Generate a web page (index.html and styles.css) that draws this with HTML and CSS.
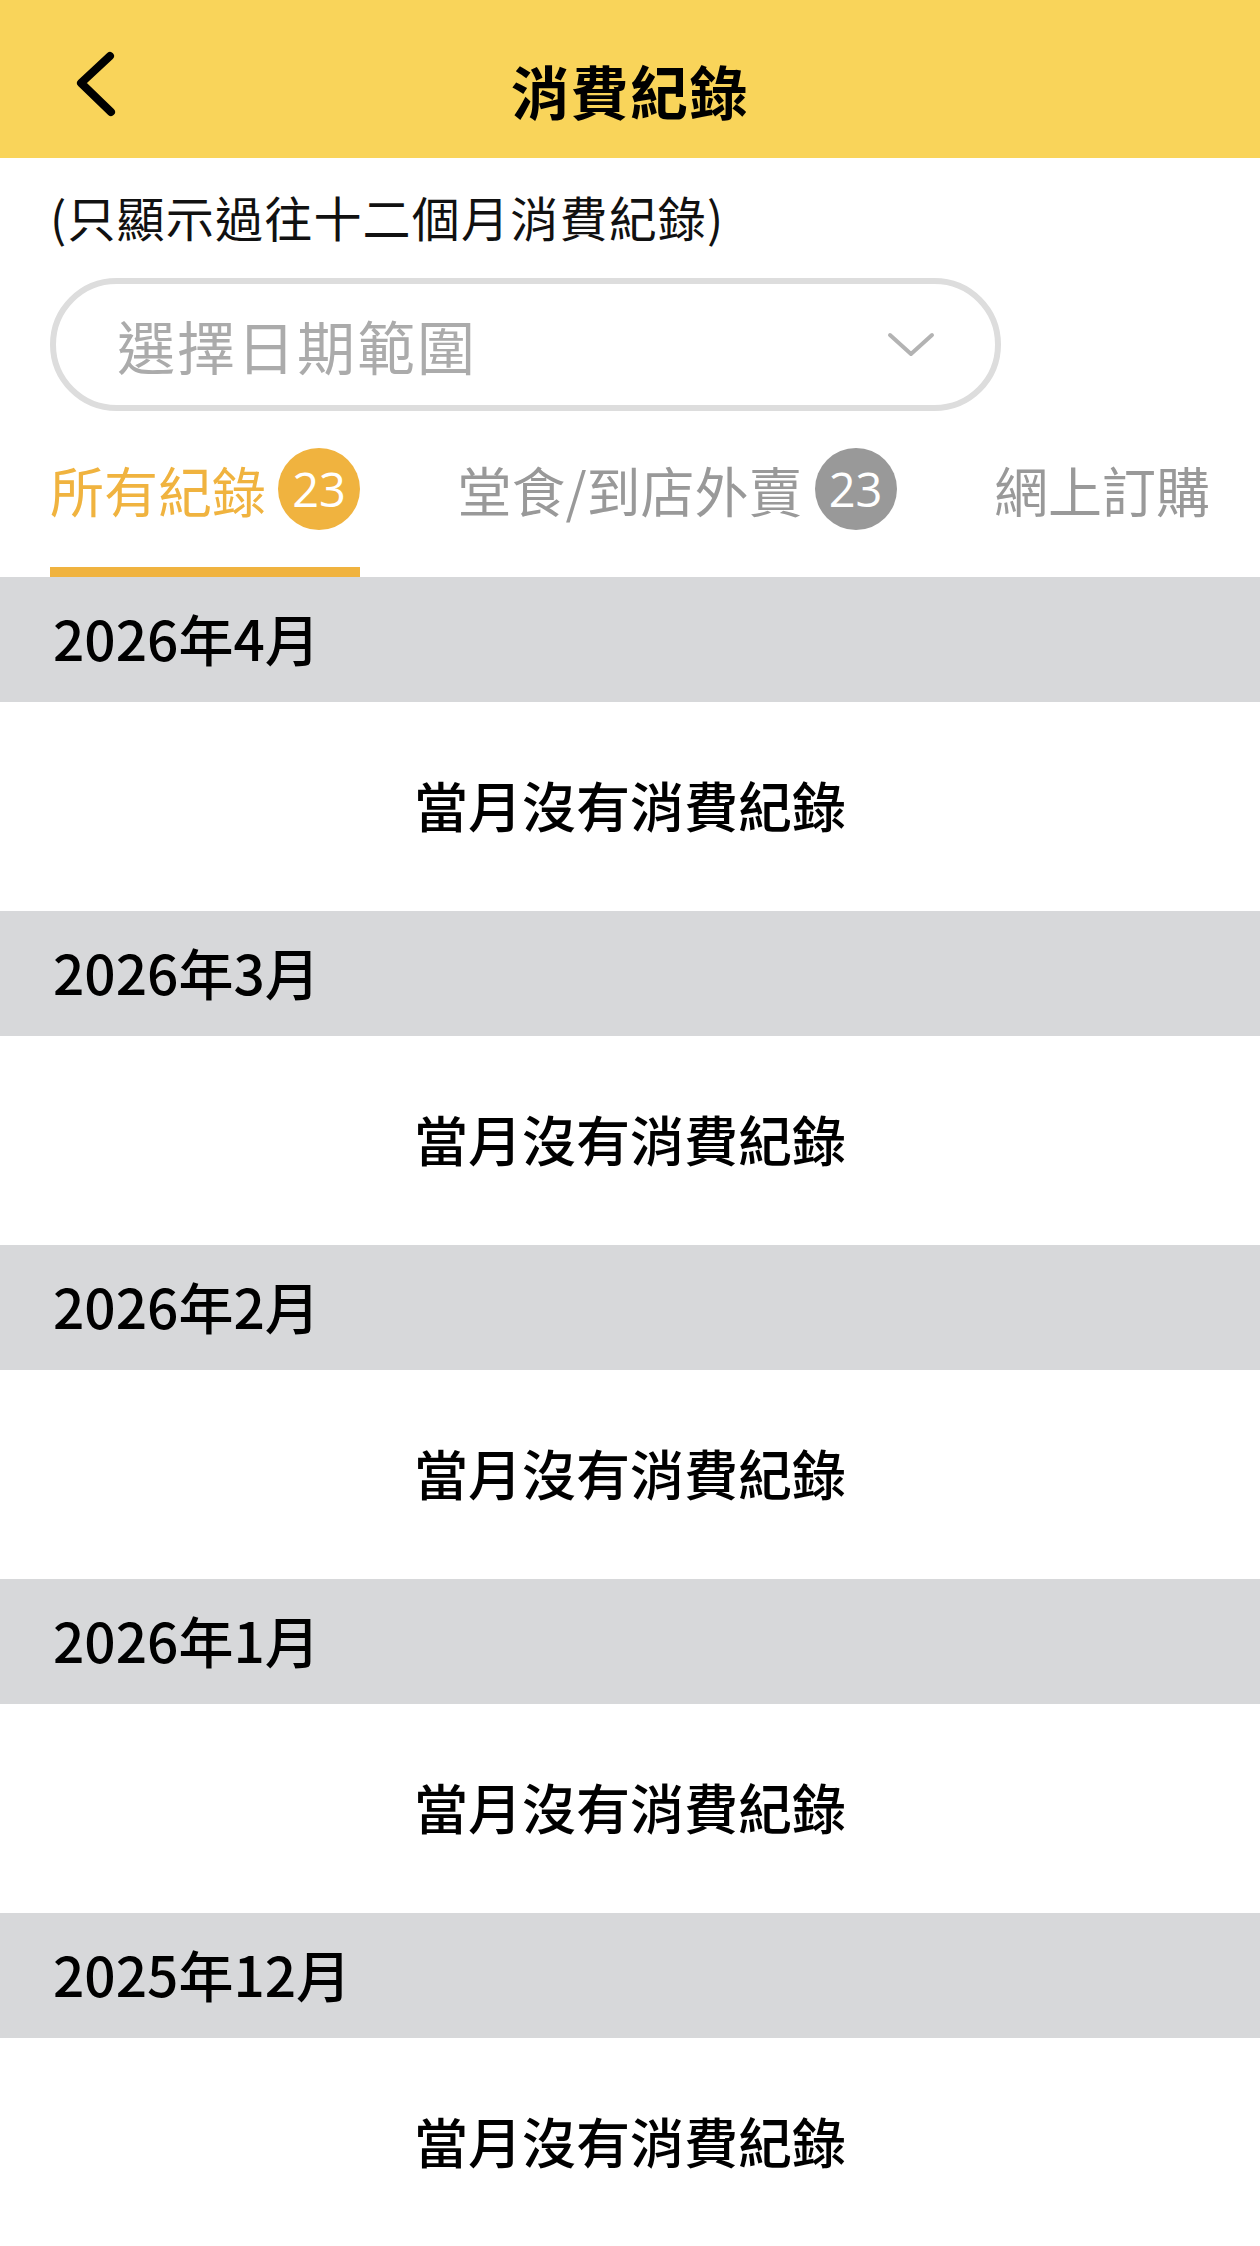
FILE: index.html
```html
<!DOCTYPE html>
<html lang="zh-Hant">
<head>
    <meta charset="UTF-8">
    <meta name="viewport" content="width=device-width, initial-scale=1.0">
    <title>消費紀錄</title>
    <link rel="stylesheet" href="styles.css">
</head>
<body>
    <!-- Barra superior -->
    <header class="topbar">
        <a class="back" href="#">
            <svg width="50" height="80" viewBox="0 0 50 80">
                <polyline points="40,5 11,32 41,61" fill="none" stroke="#000" stroke-width="8" stroke-linecap="round" stroke-linejoin="round"/>
            </svg>
        </a>
        <h1 class="title">消費紀錄</h1>
        <span></span>
    </header>

    <p class="note">(只顯示過往十二個月消費紀錄)</p>

    <div class="select">
        <span class="placeholder">選擇日期範圍</span>
        <svg width="48" height="28" viewBox="0 0 48 28">
            <polyline points="3,4 24,23 45,4" fill="none" stroke="#b3b3b3" stroke-width="4" stroke-linecap="round" stroke-linejoin="round"/>
        </svg>
    </div>

    <nav class="tabs">
        <div class="tab active">
            <div class="tab-row"><span>所有紀錄</span><span class="badge">23</span></div>
        </div>
        <div class="tab">
            <div class="tab-row"><span>堂食/到店外賣</span><span class="badge">23</span></div>
        </div>
        <div class="tab">
            <div class="tab-row"><span>網上訂購</span></div>
        </div>
    </nav>

    <div id="meses"></div>

    <script>
        // Lista de meses (todos sin registros)
        const meses = ['2026年4月', '2026年3月', '2026年2月', '2026年1月', '2025年12月'];
        const contenedor = document.getElementById('meses');

        meses.forEach(mes => {
            const cabecera = document.createElement('div');
            cabecera.classList.add('month');
            cabecera.textContent = mes;
            contenedor.appendChild(cabecera);

            const vacio = document.createElement('div');
            vacio.classList.add('empty');
            vacio.textContent = '當月沒有消費紀錄';
            contenedor.appendChild(vacio);
        });
    </script>
</body>
</html>
```

FILE: styles.css
```css
/* General */
body {
    font-family: 'Noto Sans CJK TC', 'Noto Sans', sans-serif;
    margin: 0;
    padding: 0;
    background-color: #fff;
    color: #000;
}

/* Barra superior amarilla */
.topbar {
    display: grid;
    grid-template-columns: 1fr auto 1fr;
    align-items: center;
    height: 158px;
    box-sizing: border-box;
    padding-top: 24px;
    background-color: #f9d45a;
}

.back {
    display: flex;
    margin-left: 70px;
    width: 50px;
}

.title {
    margin: 0;
    font-size: 58px;
    font-weight: 700;
    letter-spacing: 1.5px;
    line-height: 1.2;
}

/* Nota */
.note {
    margin: 28px 50px 0;
    font-size: 48px;
    letter-spacing: 1.2px;
    line-height: 60px;
    color: #111;
}

/* Selector de fechas */
.select {
    display: flex;
    align-items: center;
    justify-content: space-between;
    width: 951px;
    height: 133px;
    box-sizing: border-box;
    margin: 32px 0 0 50px;
    padding: 0 60px 0 61px;
    border: 6px solid #dddddd;
    border-radius: 67px;
}

.placeholder {
    font-size: 58px;
    letter-spacing: 2px;
    color: #ababab;
}

/* Pestanas */
.tabs {
    display: flex;
    justify-content: space-between;
    padding: 0 50px;
}

.tab {
    padding: 37px 0 37px;
    border-bottom: 10px solid transparent;
    color: #999;
    font-size: 54px;
}

.tab.active {
    color: #f0b33f;
    border-bottom-color: #f0b33f;
}

.tab-row {
    display: flex;
    align-items: center;
    gap: 12px;
    height: 82px;
}

.badge {
    width: 82px;
    height: 82px;
    border-radius: 50%;
    background-color: #999;
    color: #fff;
    font-family: 'Open Sans', sans-serif;
    font-size: 47px;
    line-height: 82px;
    text-align: center;
}

.tab.active .badge {
    background-color: #f0b33f;
}

/* Meses */
.month {
    display: flex;
    align-items: center;
    height: 125px;
    box-sizing: border-box;
    padding: 0 0 6px 53px;
    background-color: #d7d8da;
    font-size: 55px;
    font-weight: 500;
}

.empty {
    display: flex;
    align-items: center;
    justify-content: center;
    height: 209px;
    box-sizing: border-box;
    padding-bottom: 4px;
    font-size: 54px;
    font-weight: 500;
}
```
